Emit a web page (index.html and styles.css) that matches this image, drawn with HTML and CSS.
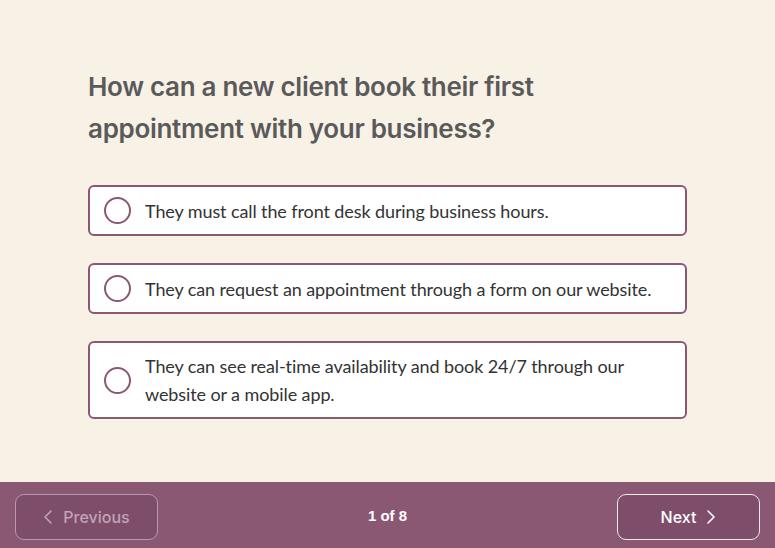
FILE: index.html
```html
<!DOCTYPE html>
<html>
<head>
<meta charset="utf-8">
<link rel="stylesheet" href="styles.css">
</head>
<body>
<div class="page">
  <main class="content">
    <h1 class="question">How can a new client book their first appointment with your business?</h1>
    <div class="options">
      <label class="option">
        <span class="radio"></span>
        <span class="option-text">They must call the front desk during business hours.</span>
      </label>
      <label class="option">
        <span class="radio"></span>
        <span class="option-text">They can request an appointment through a form on our website.</span>
      </label>
      <label class="option">
        <span class="radio"></span>
        <span class="option-text">They can see real-time availability and book 24/7 through our website or a mobile app.</span>
      </label>
    </div>
  </main>
  <footer class="footer">
    <button class="btn btn-prev">
      <svg class="chev" width="10" height="16" viewBox="0 0 10 16"><path d="M8 2 L2 8 L8 14" fill="none" stroke="currentColor" stroke-width="1.6" stroke-linecap="round" stroke-linejoin="round"/></svg>
      <span>Previous</span>
    </button>
    <div class="progress">1 of 8</div>
    <button class="btn btn-next">
      <span>Next</span>
      <svg class="chev" width="10" height="16" viewBox="0 0 10 16"><path d="M2 2 L8 8 L2 14" fill="none" stroke="currentColor" stroke-width="1.6" stroke-linecap="round" stroke-linejoin="round"/></svg>
    </button>
  </footer>
</div>
</body>
</html>
```
FILE: styles.css
```css
* { box-sizing: border-box; }
html, body { margin: 0; padding: 0; }
body {
  background: #f8f1e6;
  font-family: "Lato", "Liberation Sans", sans-serif;
  width: 775px;
  height: 548px;
  overflow: hidden;
}
.page {
  display: flex;
  flex-direction: column;
  height: 548px;
}
.content {
  flex: 1;
  padding: 66px 0 0 88px;
}
.question {
  margin: 0;
  width: 470px;
  font-family: "Inter", "Liberation Sans", sans-serif;
  font-weight: 600;
  font-size: 26px;
  line-height: 42px;
  color: #5a5a5a;
  letter-spacing: -0.3px;
}
.options {
  display: flex;
  flex-direction: column;
  gap: 27px;
  margin-top: 35px;
  width: 599px;
}
.option {
  display: flex;
  align-items: center;
  gap: 14px;
  background: #ffffff;
  border: 2px solid #8b5874;
  border-radius: 6px;
  padding: 9px 20px 9px 14px;
  min-height: 51px;
}
.radio {
  flex: none;
  width: 27px;
  height: 27px;
  border: 2px solid #8b5874;
  border-radius: 50%;
}
.option-text {
  font-size: 18px;
  line-height: 28px;
  color: #333333;
  letter-spacing: -0.1px;
}
.footer {
  height: 66px;
  background: #8b5874;
  display: flex;
  align-items: center;
  justify-content: space-between;
  padding: 3px 15px 0;
}
.btn {
  width: 143px;
  height: 46px;
  border-radius: 9px;
  background: #7d4d69;
  display: flex;
  align-items: center;
  justify-content: center;
  gap: 10px;
  font-family: "Inter", "Liberation Sans", sans-serif;
  font-size: 16px;
  font-weight: 500;
}
.btn-prev {
  border: 1px solid #b898aa;
  color: #c1a4b4;
}
.btn-next {
  border: 1px solid #f1e6ea;
  color: #ffffff;
}
.progress {
  color: #ffffff;
  font-family: "Liberation Sans", sans-serif;
  font-weight: 700;
  font-size: 15px;
  margin-bottom: 3px;
}
```
